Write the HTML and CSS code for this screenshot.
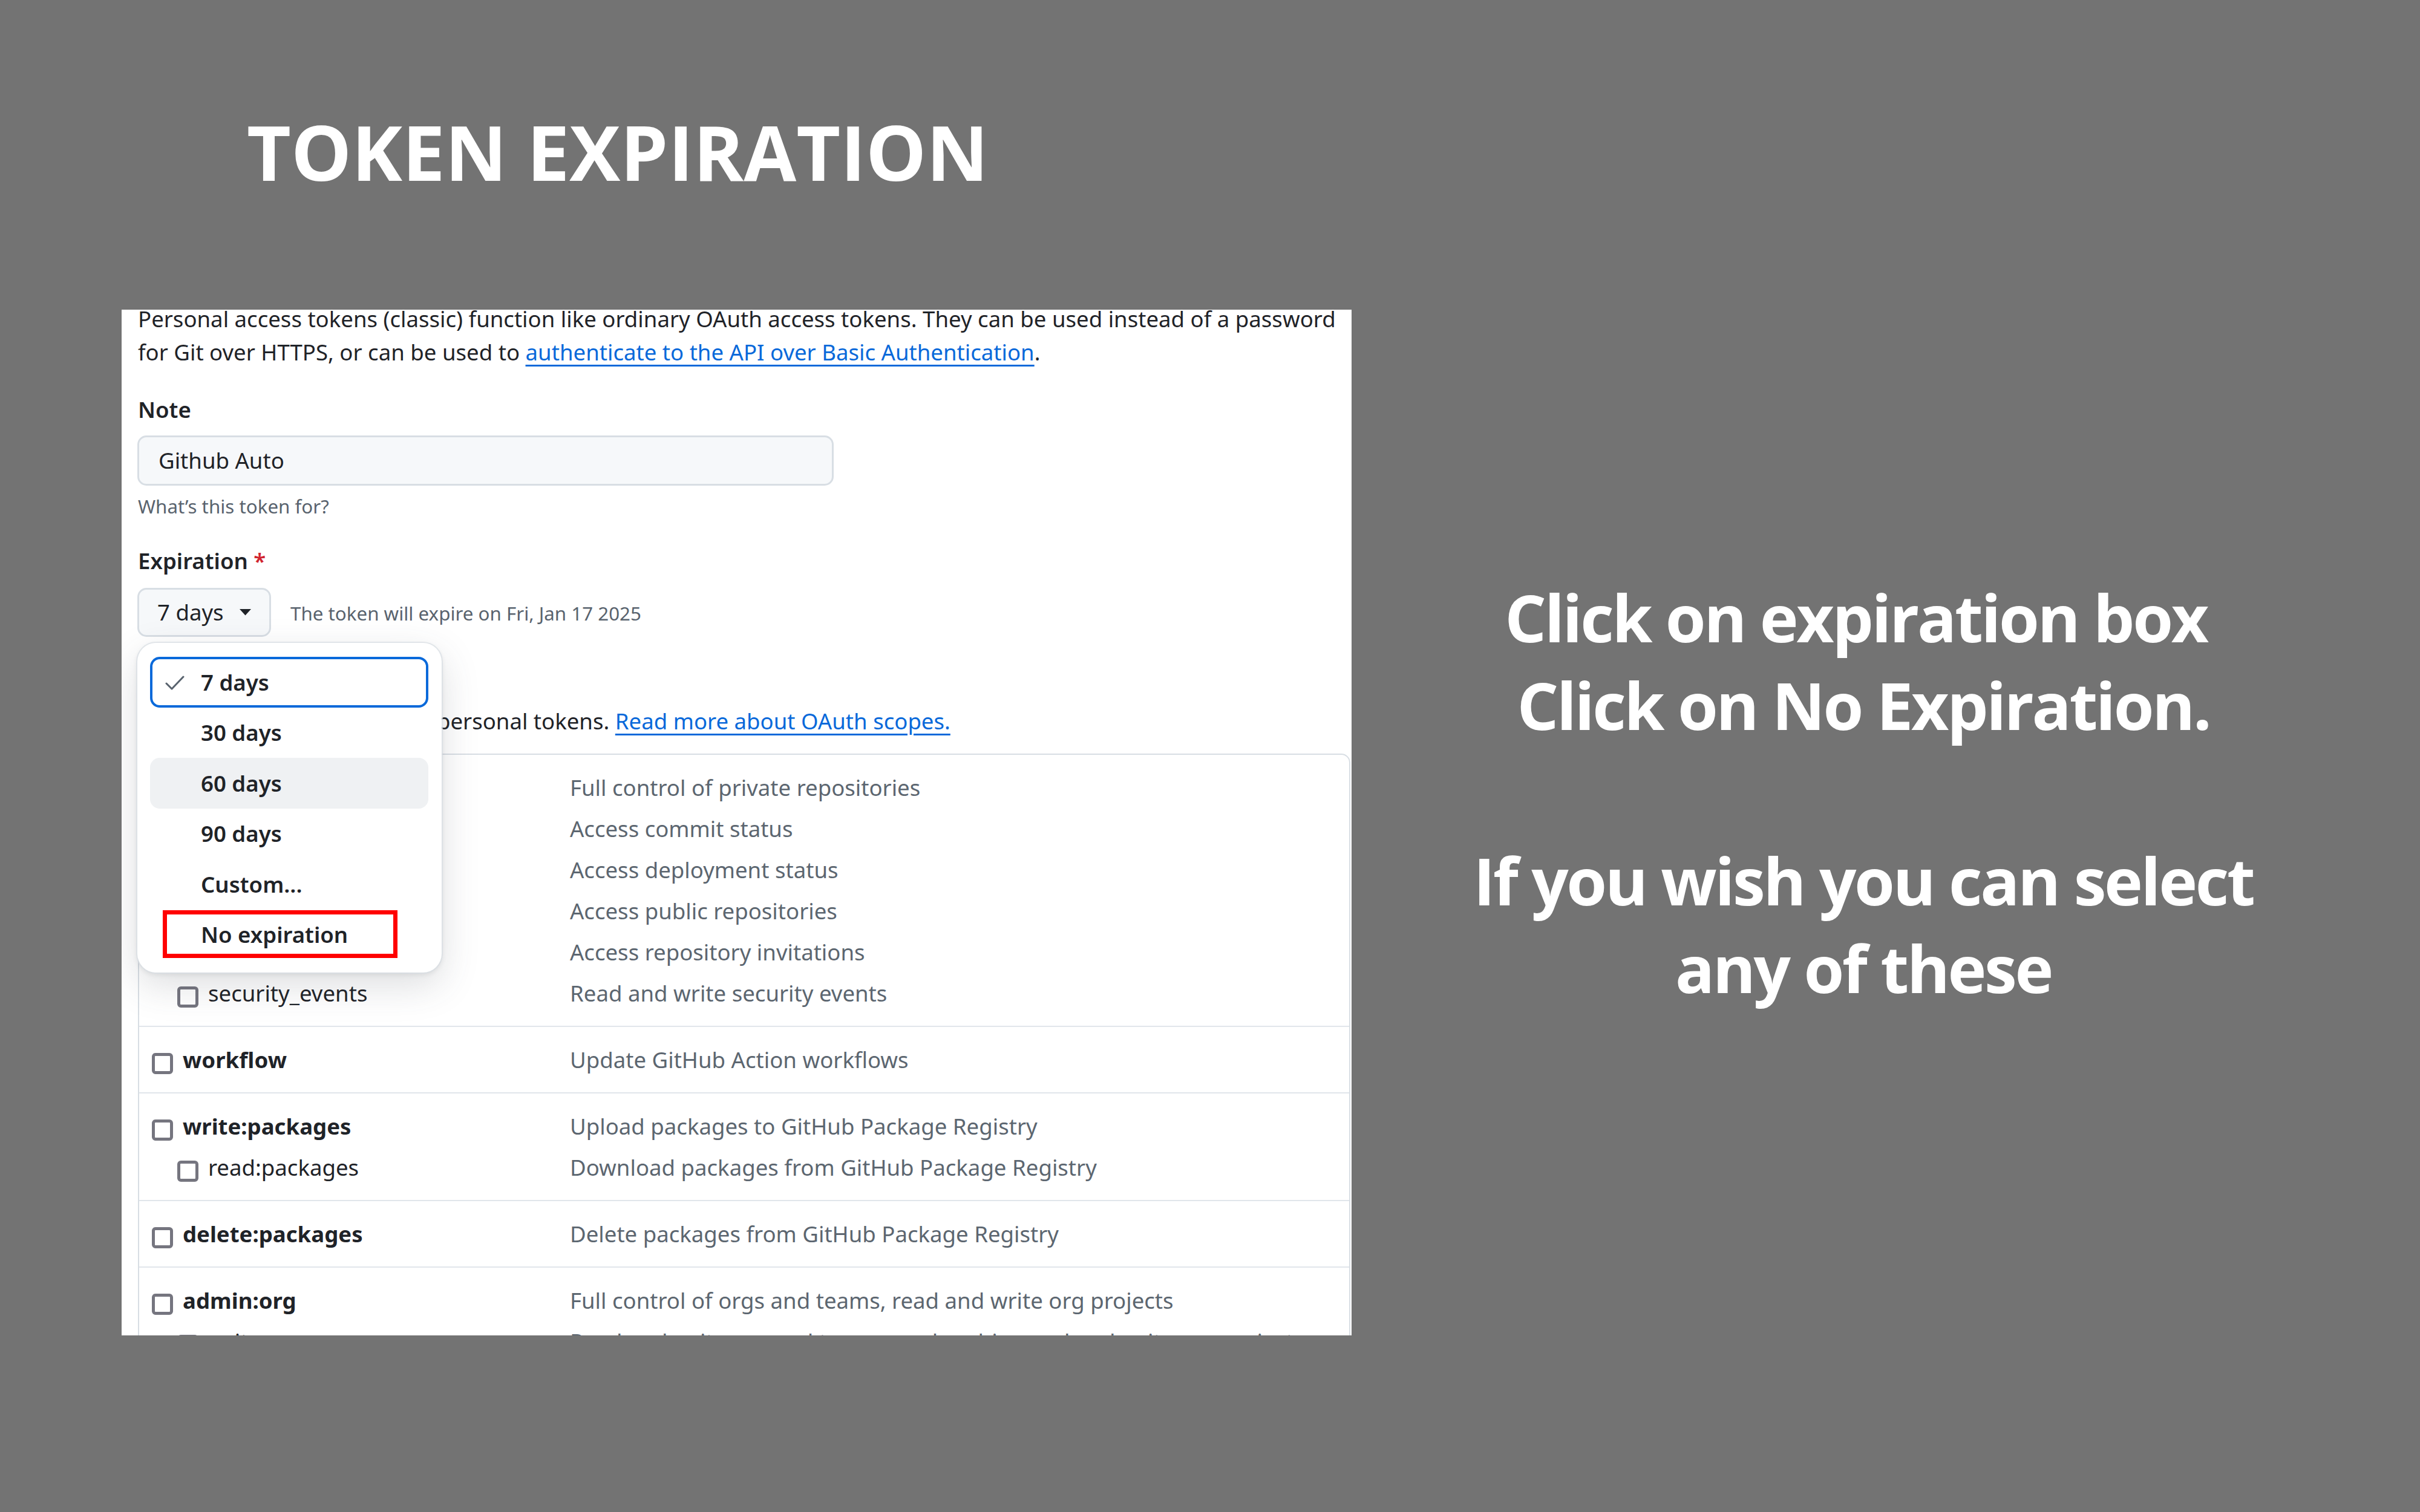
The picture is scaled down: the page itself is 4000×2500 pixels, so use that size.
FILE: index.html
```html
<!DOCTYPE html>
<html lang="en">
<head>
<meta charset="utf-8">
<title>Token Expiration</title>
<link rel="stylesheet" href="styles.css">
</head>
<body>
<div class="page">
  <h1 class="title">TOKEN EXPIRATION</h1>
  <div class="main">
    <div class="panel">
      <div class="form">
        <p class="intro">Personal access tokens (classic) function like ordinary OAuth access tokens. They can be used instead of a password<br>for Git over HTTPS, or can be used to <a class="link">authenticate to the API over Basic Authentication</a>.</p>
        <div class="label label-note">Note</div>
        <div class="input">Github Auto</div>
        <div class="hint">What’s this token for?</div>
        <div class="label label-exp">Expiration <span class="req">*</span></div>
        <div class="exp-row">
          <div class="select"><span>7 days</span><svg class="caret" width="19" height="11" viewBox="0 0 19 11"><polygon points="0,0 19,0 9.5,10.5" fill="#1f2328"/></svg></div>
          <span class="exp-note">The token will expire on Fri, Jan 17 2025</span>
        </div>
        <div class="label label-scopes">Select scopes</div>
        <p class="scopes-desc">Scopes define the access for personal tokens. <a class="link">Read more about OAuth scopes.</a></p>
        <div class="scope-table">
          <div class="scope-row">
            <div class="line"><div class="name"><span class="cb"></span><b>repo</b></div><div class="desc">Full control of private repositories</div></div>
            <div class="line"><div class="name sub"><span class="cb"></span><span>repo:status</span></div><div class="desc">Access commit status</div></div>
            <div class="line"><div class="name sub"><span class="cb"></span><span>repo_deployment</span></div><div class="desc">Access deployment status</div></div>
            <div class="line"><div class="name sub"><span class="cb"></span><span>public_repo</span></div><div class="desc">Access public repositories</div></div>
            <div class="line"><div class="name sub"><span class="cb"></span><span>repo:invite</span></div><div class="desc">Access repository invitations</div></div>
            <div class="line"><div class="name sub"><span class="cb"></span><span>security_events</span></div><div class="desc">Read and write security events</div></div>
          </div>
          <div class="scope-row">
            <div class="line"><div class="name"><span class="cb"></span><b>workflow</b></div><div class="desc">Update GitHub Action workflows</div></div>
          </div>
          <div class="scope-row">
            <div class="line"><div class="name"><span class="cb"></span><b>write:packages</b></div><div class="desc">Upload packages to GitHub Package Registry</div></div>
            <div class="line"><div class="name sub"><span class="cb"></span><span>read:packages</span></div><div class="desc">Download packages from GitHub Package Registry</div></div>
          </div>
          <div class="scope-row">
            <div class="line"><div class="name"><span class="cb"></span><b>delete:packages</b></div><div class="desc">Delete packages from GitHub Package Registry</div></div>
          </div>
          <div class="scope-row">
            <div class="line"><div class="name"><span class="cb"></span><b>admin:org</b></div><div class="desc">Full control of orgs and teams, read and write org projects</div></div>
            <div class="line"><div class="name sub"><span class="cb"></span><span>write:org</span></div><div class="desc">Read and write org and team membership, read and write org projects</div></div>
            <div class="line"><div class="name sub"><span class="cb"></span><span>read:org</span></div><div class="desc">Read org and team membership, read org projects</div></div>
          </div>
        </div>
      </div>
      <div class="menu">
        <div class="item selected"><svg class="check" width="32" height="26" viewBox="0 0 32 26"><polyline points="2,14 11,23 30,3" fill="none" stroke="#59636e" stroke-width="3" stroke-linecap="round" stroke-linejoin="round"/></svg>7 days</div>
        <div class="item">30 days</div>
        <div class="item hover">60 days</div>
        <div class="item">90 days</div>
        <div class="item">Custom...</div>
        <div class="item">No expiration</div>
        <div class="red-box"></div>
      </div>
    </div>
    <div class="notes">
      <p>Click on expiration box&nbsp;</p>
      <p>Click on No Expiration.</p>
      <p class="gap">If you wish you can select</p>
      <p>any of these</p>
    </div>
  </div>
</div>
</body>
</html>
```

FILE: styles.css
```css
html, body {
  margin: 0;
  padding: 0;
}

body {
  background: #737373;
}

.page {
  width: 4000px;
  height: 2500px;
  background: #737373;
  overflow: hidden;
}

.title {
  margin: 0;
  padding: 187px 0 0 408px;
  font-family: "Open Sans", "Noto Sans", sans-serif;
  font-weight: 700;
  font-size: 126px;
  line-height: 126px;
  color: #ffffff;
  white-space: nowrap;
}

.main {
  display: flex;
  align-items: flex-start;
  margin-top: 199px;
}

.panel {
  position: relative;
  flex: none;
  margin-left: 201px;
  width: 2033px;
  height: 1696px;
  background: #ffffff;
  overflow: hidden;
}

.form {
  margin-top: -12px;
  padding: 0 2px 0 27px;
  font-family: "Noto Sans", "Open Sans", sans-serif;
  font-size: 36.6px;
  line-height: 55px;
  color: #1f2328;
}

.intro {
  margin: 0;
  white-space: nowrap;
}

.link {
  color: #0969da;
  text-decoration: underline;
  text-decoration-thickness: 3px;
  text-underline-offset: 7px;
}

.label {
  font-weight: 600;
}

.label-note {
  margin-top: 39.5px;
}

.input {
  box-sizing: border-box;
  margin-top: 15.5px;
  width: 1151px;
  height: 83px;
  margin-left: -1px;
  padding-left: 32px;
  background: #f6f8fa;
  border: 3px solid #d8dee4;
  border-radius: 15px;
  line-height: 77px;
}

.hint {
  margin-top: 11.4px;
  font-size: 31.3px;
  line-height: 47px;
  color: #59636e;
}

.label-exp {
  margin-top: 39px;
}

.req {
  color: #d1242f;
}

.exp-row {
  display: flex;
  align-items: baseline;
  margin-top: 16.6px;
  margin-left: -1px;
}

.select {
  box-sizing: border-box;
  display: inline-flex;
  align-items: center;
  justify-content: space-between;
  width: 221px;
  height: 81px;
  padding: 0 30px;
  background: #f6f8fa;
  border: 3px solid #d8dee4;
  border-radius: 15px;
}

.caret {
  display: block;
}

.exp-note {
  margin-left: 32px;
  font-size: 31.3px;
  color: #59636e;
}

.label-scopes {
  margin-top: 27px;
}

.scopes-desc {
  margin: 30px 0 0;
  white-space: nowrap;
}

.scope-table {
  margin-top: 26px;
  border: 2px solid #d8dee4;
  border-radius: 15px;
}

.scope-row {
  padding: 20px 0;
  border-bottom: 2px solid #e1e6eb;
}

.line {
  display: flex;
  height: 68px;
  line-height: 68px;
  white-space: nowrap;
}

.name {
  box-sizing: border-box;
  flex: none;
  display: flex;
  align-items: flex-start;
  width: 712px;
  padding-left: 21px;
}

.name b {
  font-weight: 700;
}

.name.sub {
  padding-left: 63px;
}

.cb {
  box-sizing: border-box;
  flex: none;
  width: 35px;
  height: 35px;
  margin-top: 23px;
  margin-right: 16px;
  border: 5px solid #75757f;
  border-radius: 6px;
  background: #ffffff;
}

.desc {
  color: #5c6670;
}

.menu {
  position: absolute;
  left: 26px;
  top: 551px;
  box-sizing: border-box;
  width: 503px;
  height: 545px;
  padding: 23px 22px 21px 21px;
  background: #ffffff;
  border-radius: 31px;
  box-shadow: 0 0 0 2px rgba(216, 222, 228, 0.7), 0 3px 8px rgba(31, 35, 40, 0.10), 0 21px 62px rgba(66, 74, 83, 0.18);
  font-family: "Noto Sans", "Open Sans", sans-serif;
  font-size: 36.6px;
  color: #1f2328;
}

.item {
  position: relative;
  box-sizing: border-box;
  display: flex;
  align-items: center;
  height: 83.5px;
  padding-left: 84px;
  border-radius: 16px;
  font-weight: 600;
  white-space: nowrap;
}

.item.selected {
  box-shadow: inset 0 0 0 4px #0969da;
}

.item.hover {
  background: #eff1f3;
}

.check {
  position: absolute;
  left: 25px;
  top: 30px;
}

.red-box {
  position: absolute;
  left: 42px;
  top: 442px;
  box-sizing: border-box;
  width: 388px;
  height: 79px;
  border: 7px solid #ff0000;
}

.notes {
  flex: none;
  width: 1400px;
  margin-left: 146px;
  margin-top: 435.6px;
  text-align: center;
  font-family: "Open Sans", "Noto Sans", sans-serif;
  font-weight: 700;
  font-size: 108px;
  line-height: 145px;
  letter-spacing: -3.3px;
  color: #ffffff;
}

.notes p {
  margin: 0;
  white-space: nowrap;
}

.notes .gap {
  margin-top: 145px;
}
```
